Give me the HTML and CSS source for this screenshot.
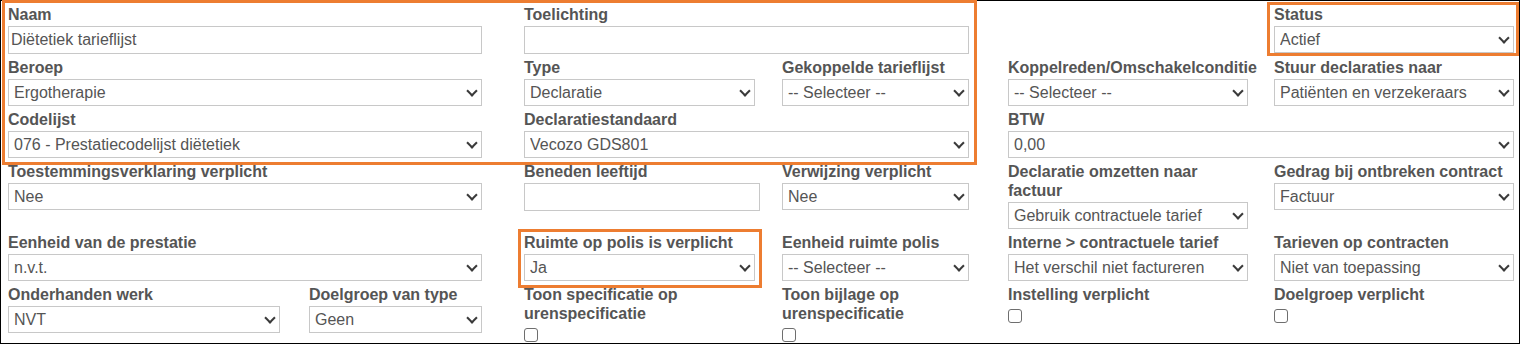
FILE: index.html
```html
<!DOCTYPE html>
<html lang="nl">
<head>
<meta charset="utf-8">
<title>Tarieflijst</title>
<link rel="stylesheet" href="styles.css">
</head>
<body>
<div class="page">
  <form class="form">
    <div class="grid">
      <div class="field col-a"><label class="label">Naam</label><input class="input" type="text" value="Diëtetiek tarieflijst"></div>
      <div class="field col-bc"><label class="label">Toelichting</label><input class="input" type="text" value=""></div>
      <div class="field col-e"><label class="label">Status</label><div class="sel"><select class="select"><option>Actief</option></select></div></div>

      <div class="field col-a"><label class="label">Beroep</label><div class="sel"><select class="select"><option>Ergotherapie</option></select></div></div>
      <div class="field col-b"><label class="label">Type</label><div class="sel sel--b"><select class="select"><option>Declaratie</option></select></div></div>
      <div class="field col-c"><label class="label">Gekoppelde tarieflijst</label><div class="sel"><select class="select"><option>-- Selecteer --</option></select></div></div>
      <div class="field col-d"><label class="label">Koppelreden/Omschakelconditie</label><div class="sel"><select class="select"><option>-- Selecteer --</option></select></div></div>
      <div class="field col-e"><label class="label">Stuur declaraties naar</label><div class="sel"><select class="select"><option>Patiënten en verzekeraars</option></select></div></div>

      <div class="field col-a"><label class="label">Codelijst</label><div class="sel"><select class="select"><option>076 - Prestatiecodelijst diëtetiek</option></select></div></div>
      <div class="field col-bc"><label class="label">Declaratiestandaard</label><div class="sel"><select class="select"><option>Vecozo GDS801</option></select></div></div>
      <div class="field col-de"><label class="label">BTW</label><div class="sel"><select class="select"><option>0,00</option></select></div></div>

      <div class="field col-a"><label class="label">Toestemmingsverklaring verplicht</label><div class="sel"><select class="select"><option>Nee</option></select></div></div>
      <div class="field col-b"><label class="label">Beneden leeftijd</label><input class="input" type="text" value=""></div>
      <div class="field col-c"><label class="label">Verwijzing verplicht</label><div class="sel"><select class="select"><option>Nee</option></select></div></div>
      <div class="field col-d"><label class="label">Declaratie omzetten naar factuur</label><div class="sel"><select class="select"><option>Gebruik contractuele tarief</option></select></div></div>
      <div class="field col-e"><label class="label">Gedrag bij ontbreken contract</label><div class="sel"><select class="select"><option>Factuur</option></select></div></div>

      <div class="field col-a"><label class="label">Eenheid van de prestatie</label><div class="sel"><select class="select"><option>n.v.t.</option></select></div></div>
      <div class="field col-b"><label class="label">Ruimte op polis is verplicht</label><div class="sel sel--b"><select class="select"><option>Ja</option></select></div></div>
      <div class="field col-c"><label class="label">Eenheid ruimte polis</label><div class="sel"><select class="select"><option>-- Selecteer --</option></select></div></div>
      <div class="field col-d"><label class="label">Interne &gt; contractuele tarief</label><div class="sel"><select class="select"><option>Het verschil niet factureren</option></select></div></div>
      <div class="field col-e"><label class="label">Tarieven op contracten</label><div class="sel"><select class="select"><option>Niet van toepassing</option></select></div></div>

      <div class="field col-a1"><label class="label">Onderhanden werk</label><div class="sel"><select class="select"><option>NVT</option></select></div></div>
      <div class="field col-a2"><label class="label">Doelgroep van type</label><div class="sel"><select class="select"><option>Geen</option></select></div></div>
      <div class="field col-b"><label class="label">Toon specificatie op urenspecificatie</label><input class="check" type="checkbox"></div>
      <div class="field col-c"><label class="label">Toon bijlage op urenspecificatie</label><input class="check" type="checkbox"></div>
      <div class="field col-d"><label class="label">Instelling verplicht</label><input class="check" type="checkbox"></div>
      <div class="field col-e"><label class="label">Doelgroep verplicht</label><input class="check" type="checkbox"></div>
    </div>
  </form>
  <div class="mark mark--main"></div>
  <div class="mark mark--status"></div>
  <div class="mark mark--ruimte"></div>
</div>
</body>
</html>
```

FILE: styles.css
```css
* {
  box-sizing: border-box;
}

body {
  margin: 0;
  background: #fff;
  font-family: "Liberation Sans", Arial, sans-serif;
}

.page {
  position: relative;
  width: 1520px;
  height: 345px;
  overflow: hidden;
}

.form {
  width: 1520px;
  height: 344px;
  margin: 0;
  border: 1px solid #000;
  padding: 4px 0 0 7px;
  overflow: hidden;
}

.grid {
  display: grid;
  grid-template-columns:
    [a-start a1-start] 272px [a1-end] 29px [a2-start] 173px [a2-end a-end] 42px
    [b-start bc-start] 236px [b-end] 22px [c-start] 187px [c-end bc-end] 39px
    [d-start de-start] 240px [d-end] 26px [e-start] 240px [e-end de-end];
  align-items: start;
}

.col-a { grid-column: a; }
.col-a1 { grid-column: a1; }
.col-a2 { grid-column: a2; }
.col-b { grid-column: b; }
.col-c { grid-column: c; }
.col-bc { grid-column: bc; }
.col-d { grid-column: d; }
.col-e { grid-column: e; }
.col-de { grid-column: de; }

.field {
  min-width: 0;
  margin-bottom: 4px;
}

.label {
  display: block;
  margin-bottom: 2px;
  font-size: 16px;
  font-weight: bold;
  line-height: 19px;
  color: #555;
}

.input,
.select {
  display: block;
  width: 100%;
  margin: 0;
  border: 1px solid #c8c8c8;
  border-radius: 0;
  background: #fff;
  color: #555;
  font-family: "Liberation Sans", Arial, sans-serif;
  font-size: 16px;
  outline: none;
}

.input {
  height: 28px;
  padding: 0 2px;
}

.select {
  height: 27px;
  padding: 0 24px 0 5px;
  -webkit-appearance: none;
  appearance: none;
}

.sel {
  position: relative;
}

.sel--b {
  width: 231px;
}

.sel::after {
  content: "";
  position: absolute;
  right: 6px;
  top: 50%;
  margin-top: -6px;
  width: 6px;
  height: 6px;
  border-right: 2px solid #3a3a3a;
  border-bottom: 2px solid #3a3a3a;
  transform: rotate(45deg);
  pointer-events: none;
}

.check {
  display: block;
  width: 14px;
  height: 14px;
  margin: 5px 0 0 0;
  border: 1px solid #6e6e6e;
  border-radius: 3px;
  background: #fff;
  -webkit-appearance: none;
  appearance: none;
}

.mark {
  position: absolute;
  border: 3px solid #ed7d31;
  pointer-events: none;
}

.mark--main {
  left: 2px;
  top: 0;
  width: 975px;
  height: 165px;
}

.mark--status {
  left: 1267px;
  top: 2px;
  width: 252px;
  height: 54px;
}

.mark--ruimte {
  left: 518px;
  top: 229px;
  width: 244px;
  height: 59px;
}
```
